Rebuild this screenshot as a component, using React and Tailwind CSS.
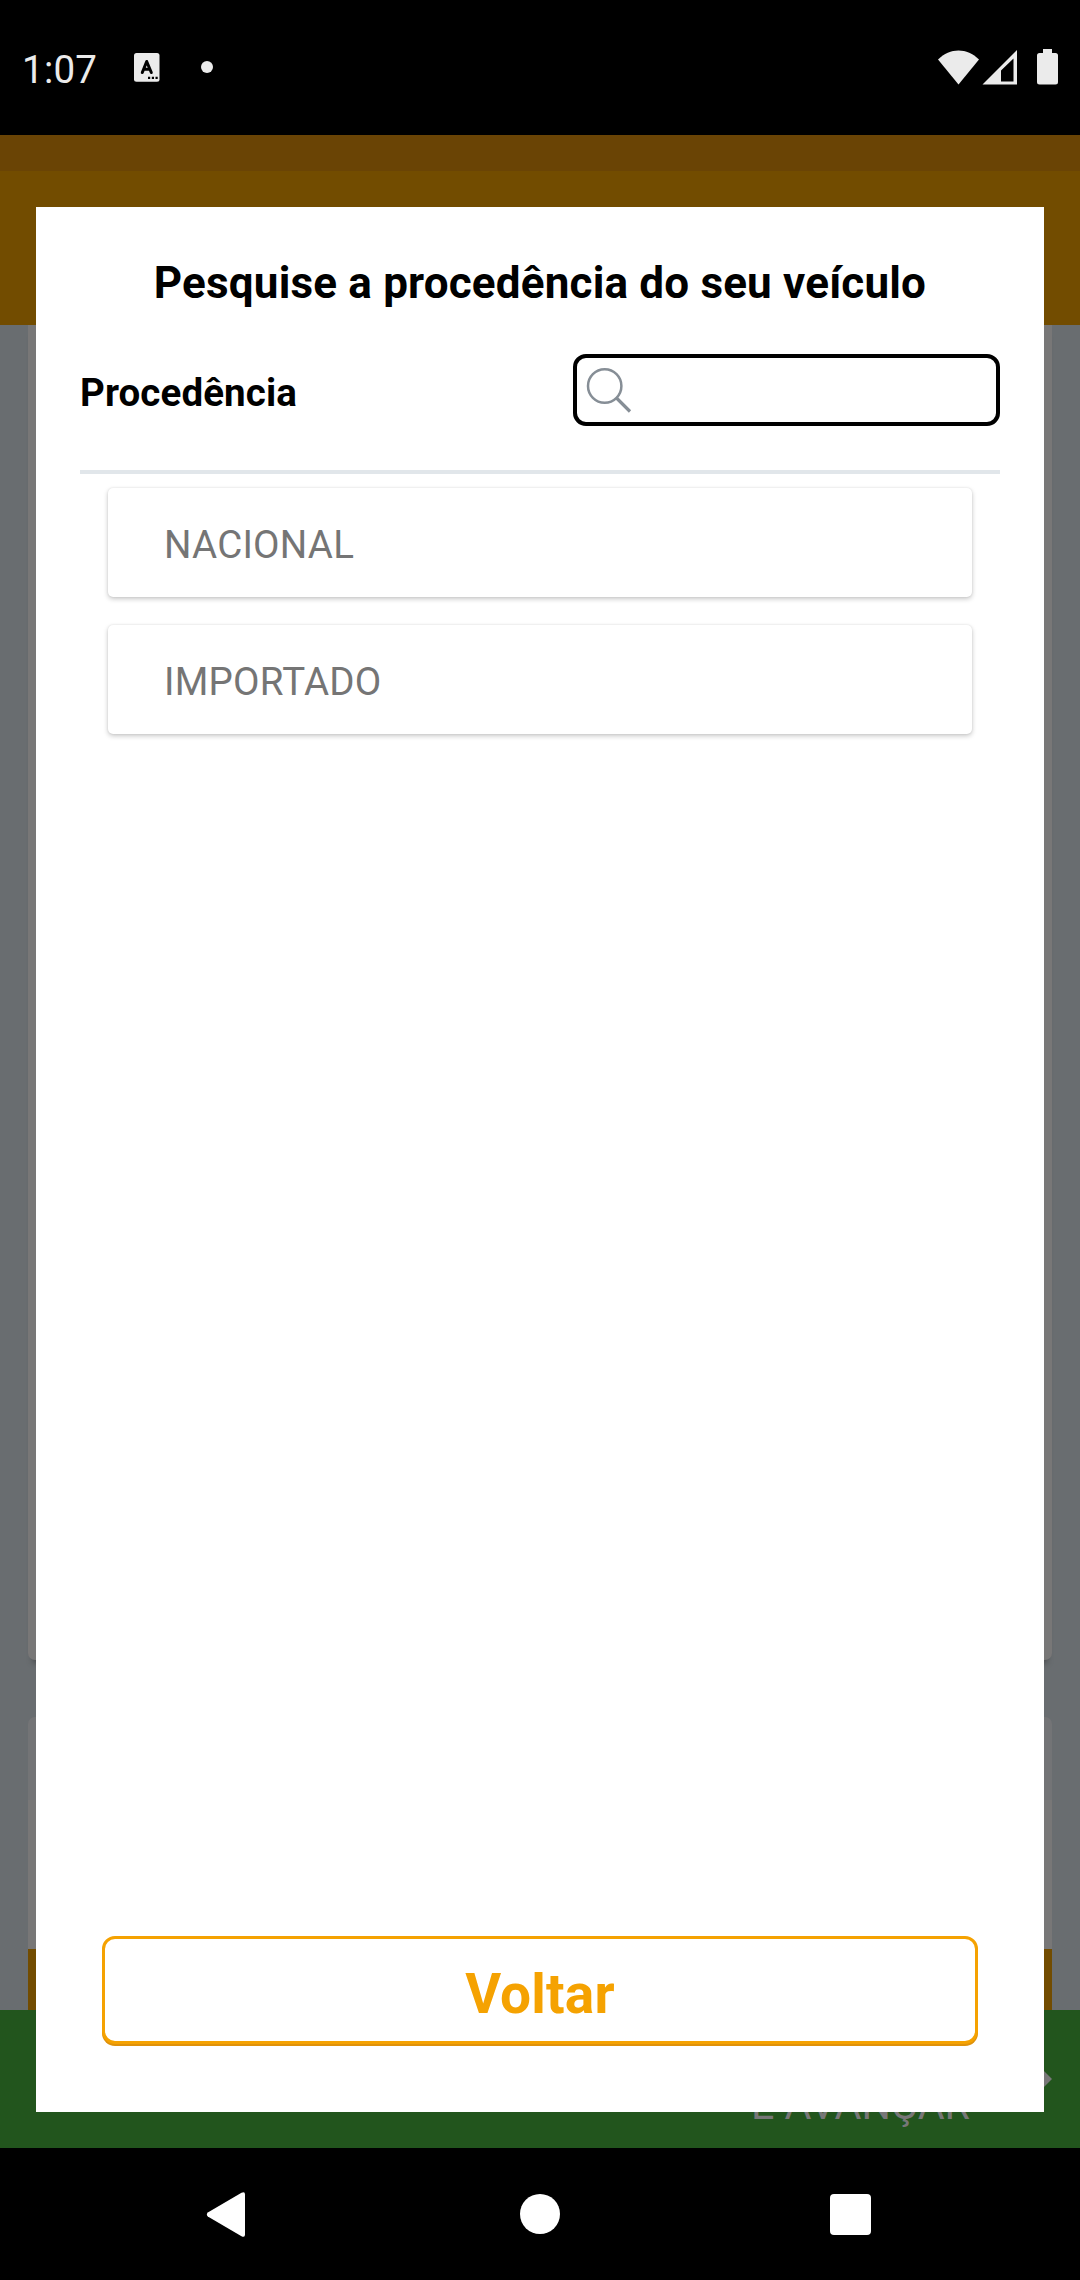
const options = ["NACIONAL", "IMPORTADO"];

function StatusBar() {
  return (
    <header className="flex h-[135px] shrink-0 items-start bg-black text-[#ebebeb]">
      <span className="ml-[22px] mt-[47px] w-[80px] text-[38.5px] leading-[46px] tracking-[0.25px]">1:07</span>
      <svg className="ml-[31.5px] mt-[53px]" width="26" height="29" viewBox="0 0 26 29">
        <rect width="25.5" height="28.7" rx="2.5" fill="#ebebeb" />
        <path d="M8.3 19.5 12.7 8.5 17.3 19.5M9.7 16.2h6" fill="none" stroke="#000" strokeWidth="3" strokeLinecap="round" strokeLinejoin="round" />
        <path d="M14 23.8h2.2v2.2H14zM17.8 23.8H20v2.2h-2.2zM21.5 23.8h2.2v2.2h-2.2z" fill="#000" />
      </svg>
      <span className="ml-[41.5px] mt-[61px] size-3 rounded-full bg-[#ebebeb]" />
      <svg className="ml-auto mr-[21px] mt-[48px]" width="121" height="38" viewBox="0 0 121 38" fill="#ebebeb">
        <path d="M0 11.5C12-.5 29-.5 41 11.5L20.5 36.5Z" />
        <path fillRule="evenodd" d="M44.5 36.5 79 2v34.500ZM63 33.500H75.500V10.500L63 22.500Z" />
        <path d="M105 1h9v4h3.500a2.500 2.500 0 0 1 2.500 2.500V34a2.500 2.500 0 0 1-2.500 2.500h-16A2.500 2.500 0 0 1 99 34V7.500A2.500 2.500 0 0 1 101.500 5h3.500Z" />
      </svg>
    </header>
  );
}

function NavigationBar() {
  return (
    <nav className="flex h-[132px] shrink-0 items-start justify-between bg-black pl-[205px] pr-[209px]">
      <svg className="mt-[43px]" width="41" height="47" viewBox="0 0 41 47" fill="#fff">
        <path d="M2.800 21.500 36.500 1.700Q40 0 40 3.500V43.500Q40 47 36.500 45.200L2.800 25.500Q.8 23.500 2.800 21.500Z" />
      </svg>
      <span className="ml-[3px] mt-[46px] size-[40px] rounded-full bg-white" />
      <span className="mt-[46px] size-[41px] rounded-[4px] bg-white" />
    </nav>
  );
}

function Background() {
  return (
    <div className="flex grow flex-col bg-[#696d70]">
      <div className="h-[36px] bg-[#6a4405]" />
      <div className="h-[154px] bg-[#724c00]" />
      <div className="mx-[28px] h-[1335px] rounded-b-[7px] bg-[#787777] shadow-[0_8px_6px_-5px_rgba(0,0,0,0.35)]" />
      <div className="mx-[28px] mt-[57px] h-[83px] rounded-t-[7px] bg-[#737476]" />
      <div className="mx-[28px] h-[149px] bg-[#787777]" />
      <div className="mx-[28px] h-[61px] bg-[#724c00]" />
      <div className="flex h-[138px] items-end justify-end gap-[50px] bg-[#22551d] pr-[28px]">
        <span className="mb-[19px] text-[41.25px] leading-[48px] text-[#777]">E AVANÇAR</span>
        <svg className="mb-[53px]" width="32" height="32" viewBox="0 0 32 32" fill="#777">
          <path d="M16 0 32 16 16 32 13 29 24 18H0v-4h24L13 3Z" />
        </svg>
      </div>
    </div>
  );
}

function SearchDialog() {
  return (
    <main className="absolute left-[36px] top-[207px] flex h-[1905px] w-[1008px] flex-col bg-white px-[44px]">
      <h1 className="mt-[50px] text-center text-[44px] font-bold leading-[52px] tracking-[0.18px] text-black">
        Pesquise a procedência do seu veículo
      </h1>
      <div className="mt-[45px] flex h-[72px] items-center justify-between">
        <label htmlFor="origin" className="mt-[6px] text-[38.5px] font-bold leading-[46px] tracking-[0.1px] text-black">Procedência</label>
        <div className="flex h-[72px] w-[427px] items-start rounded-[13px] border-4 border-black bg-white">
          <svg className="ml-[9px] mt-[9px] shrink-0" width="46" height="47" viewBox="0 0 46 47" fill="none" stroke="#868e96">
            <circle cx="18.700" cy="19" r="16.700" strokeWidth="2.500" />
            <path d="m30.500 31 13.500 13.500" strokeWidth="3.200" />
          </svg>
          <input id="origin" className="h-full min-w-0 grow bg-transparent text-[38.5px] outline-none" />
        </div>
      </div>
      <hr className="mt-[44px] h-[4px] shrink-0 border-0 bg-[#e1e6ea]" />
      <ul className="mt-[14px] flex flex-col gap-[28px] px-[28px]">
        {options.map((name) => (
          <li key={name} className="flex h-[109px] items-center rounded-[5px] bg-white pl-[56px] text-[38.5px] leading-[46px] tracking-[0.22px] text-[#757575] shadow-[0_2px_5px_rgba(0,0,0,0.22),0_0_2px_rgba(0,0,0,0.1)]">
            <span className="mt-[4px]">{name}</span>
          </li>
        ))}
      </ul>
      <button className="mx-[22px] mb-[68px] mt-auto flex h-[108px] items-center justify-center rounded-[13px] border-[3px] border-[#f5a201] bg-white text-[55px] font-bold leading-[64px] text-[#f5a201] shadow-[0_2px_0_#df920b]">
        <span className="mt-[7px] tracking-[0.2px]">Voltar</span>
      </button>
    </main>
  );
}

export default function App() {
  return (
    <div className="relative flex h-[2280px] w-[1080px] flex-col overflow-hidden bg-black font-['Roboto',sans-serif]">
      <StatusBar />
      <Background />
      <NavigationBar />
      <SearchDialog />
    </div>
  );
}
